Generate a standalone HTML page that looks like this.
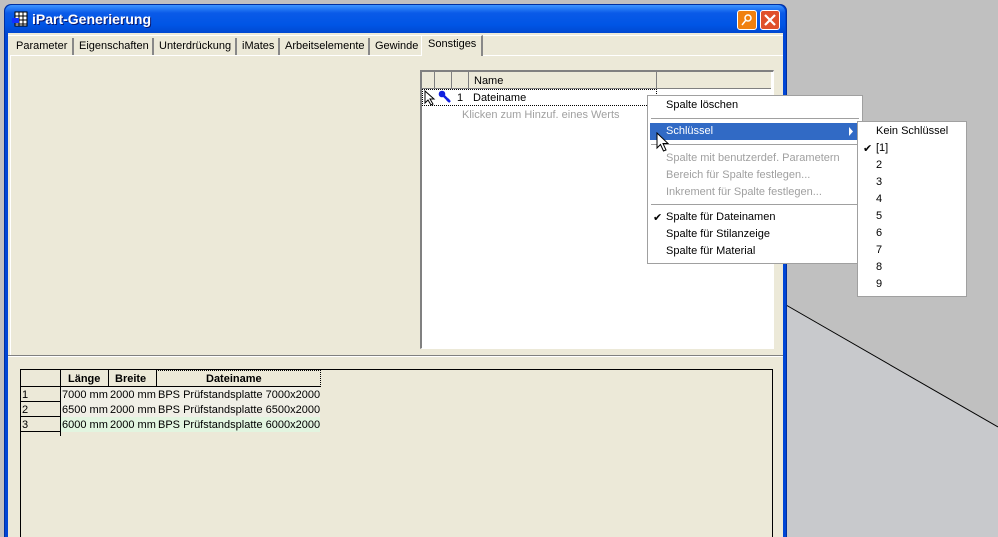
<!DOCTYPE html>
<html><head><meta charset="utf-8"><style>
*{margin:0;padding:0;box-sizing:border-box}
html,body{width:998px;height:537px;overflow:hidden}
body{background:#c0c0c0;font-family:"Liberation Sans",sans-serif;font-size:11px;color:#000;position:relative}
.a{position:absolute}
.t{position:absolute;white-space:nowrap}
</style></head><body>
<div class="a" style="left:786px;top:305px;width:212px;height:232px;background:#c8c9cc"></div>
<svg class="a" style="left:0;top:0" width="998" height="537"><polygon points="786,305 998,427 998,305" fill="#c0c0c0"/><line x1="786" y1="305" x2="998" y2="427" stroke="#000" stroke-width="1"/></svg>
<div class="a" style="left:4px;top:4px;width:783px;height:533px;background:#0046d5;border-radius:7px 7px 0 0;border:1px solid #0030a0;border-bottom:none"></div>
<div class="a" style="left:5px;top:5px;width:780px;height:28px;border-radius:7px 7px 0 0;background:linear-gradient(#3d95ff,#0a5ae8 8px,#0055e5 20px,#0048d0)"></div>
<svg class="a" style="left:11px;top:11px" width="18" height="18"><rect x="4" y="1" width="12" height="14" fill="#fff" stroke="#000"/><path d="M4 5H16M4 9H16M4 13H16M8 1V15M12 1V15" stroke="#000"/><rect x="1" y="7" width="7" height="5" fill="#1030ff"/></svg>
<div class="t" style="left:32px;top:11px;color:#fff;font-weight:bold;font-size:14px;text-shadow:1px 1px #0a1870">iPart-Generierung</div>
<div class="a" style="left:737px;top:10px;width:20px;height:20px;background:#f08010;border:1px solid #fff;border-radius:3px"></div>
<svg class="a" style="left:739px;top:12px" width="16" height="16"><circle cx="9" cy="6" r="3" fill="none" stroke="#fff" stroke-width="1.5"/><path d="M7 8L3 13" stroke="#fff" stroke-width="1.5"/></svg>
<div class="a" style="left:760px;top:10px;width:20px;height:20px;background:#e0502a;border:1px solid #fff;border-radius:3px"></div>
<svg class="a" style="left:762px;top:12px" width="16" height="16"><path d="M3 3L13 13M13 3L3 13" stroke="#fff" stroke-width="2.2"/></svg>
<div class="a" style="left:8px;top:33px;width:775px;height:504px;background:#ece9d8"></div>
<div class="a" style="left:8px;top:35px;width:775px;height:1px;background:#fff"></div>
<div class="a" style="left:10px;top:55px;width:773px;height:1px;background:#fff"></div>
<div class="t" style="left:16px;top:40px">Parameter</div>
<div class="a" style="left:72px;top:38px;width:2px;height:17px;background:#888"></div>
<div class="t" style="left:79px;top:40px">Eigenschaften</div>
<div class="a" style="left:152px;top:38px;width:2px;height:17px;background:#888"></div>
<div class="t" style="left:159px;top:40px">Unterdrückung</div>
<div class="a" style="left:235px;top:38px;width:2px;height:17px;background:#888"></div>
<div class="t" style="left:242px;top:40px">iMates</div>
<div class="a" style="left:278px;top:38px;width:2px;height:17px;background:#888"></div>
<div class="t" style="left:285px;top:40px">Arbeitselemente</div>
<div class="a" style="left:368px;top:38px;width:2px;height:17px;background:#888"></div>
<div class="t" style="left:375px;top:40px">Gewinde</div>
<div class="a" style="left:421px;top:35px;width:62px;height:21px;background:#ece9d8;border-top:1px solid #fff;border-left:1px solid #fff;border-right:2px solid #888"></div>
<div class="t" style="left:428px;top:38px">Sonstiges</div>
<div class="a" style="left:10px;top:55px;width:1px;height:300px;background:#fff"></div>
<div class="a" style="left:420px;top:70px;width:354px;height:279px;background:#fff;border-top:2px solid #808080;border-left:2px solid #808080;border-right:1px solid #fff;border-bottom:1px solid #fff"></div>
<div class="a" style="left:422px;top:72px;width:349px;height:17px;background:#ece9d8;border-bottom:1px solid #808080"></div>
<div class="a" style="left:434px;top:72px;width:1px;height:17px;background:#808080"></div>
<div class="a" style="left:451px;top:72px;width:1px;height:17px;background:#808080"></div>
<div class="a" style="left:468px;top:72px;width:1px;height:17px;background:#808080"></div>
<div class="a" style="left:656px;top:72px;width:1px;height:17px;background:#808080"></div>
<div class="t" style="left:474px;top:75px">Name</div>
<div class="a" style="left:422px;top:89px;width:235px;height:17px;border:1px dotted #000"></div>
<svg class="a" style="left:423px;top:90px" width="14" height="16"><path d="M2 1V13L5 10L8 15L10 14L7 9H11Z" fill="#fff" stroke="#000"/></svg>
<svg class="a" style="left:438px;top:90px" width="14" height="14"><circle cx="4" cy="4" r="3.3" fill="#1020e0"/><path d="M5 5L12 12M9 11L11 9" stroke="#1020e0" stroke-width="2.5"/></svg>
<div class="t" style="left:457px;top:92px">1</div>
<div class="t" style="left:473px;top:92px">Dateiname</div>
<div class="t" style="left:462px;top:109px;color:#a0a0a0">Klicken zum Hinzuf. eines Werts</div>
<div class="a" style="left:8px;top:355px;width:775px;height:1px;background:#808080"></div>
<div class="a" style="left:8px;top:356px;width:775px;height:1px;background:#fff"></div>
<div class="a" style="left:20px;top:369px;width:753px;height:170px;border:1px solid #000;background:#ece9d8"></div>
<div class="a" style="left:60px;top:370px;width:1px;height:66px;background:#000"></div>
<div class="a" style="left:60px;top:386px;width:261px;height:50px;border-top:1px solid #000"></div>
<div class="a" style="left:108px;top:370px;width:1px;height:17px;background:#000"></div>
<div class="a" style="left:156px;top:370px;width:1px;height:17px;background:#000"></div>
<div class="a" style="left:156px;top:370px;width:165px;height:17px;border:1px dotted #000"></div>
<div class="t" style="left:68px;top:373px;font-weight:bold">Länge</div>
<div class="t" style="left:115px;top:373px;font-weight:bold">Breite</div>
<div class="t" style="left:206px;top:373px;font-weight:bold">Dateiname</div>
<div class="a" style="left:21px;top:386px;width:40px;height:1px;background:#000"></div>
<div class="a" style="left:21px;top:401px;width:40px;height:1px;background:#000"></div>
<div class="a" style="left:21px;top:416px;width:40px;height:1px;background:#000"></div>
<div class="a" style="left:21px;top:431px;width:40px;height:1px;background:#000"></div>
<div class="a" style="left:61px;top:387px;width:259px;height:30px;background:#f0efe6"></div>
<div class="a" style="left:61px;top:417px;width:259px;height:15px;background:#e2f5e0"></div>
<div class="t" style="left:22px;top:389px">1</div><div class="t" style="left:62px;top:389px">7000 mm</div><div class="t" style="left:110px;top:389px">2000 mm</div><div class="t" style="left:158px;top:389px">BPS Prüfstandsplatte 7000x2000</div>
<div class="t" style="left:22px;top:404px">2</div><div class="t" style="left:62px;top:404px">6500 mm</div><div class="t" style="left:110px;top:404px">2000 mm</div><div class="t" style="left:158px;top:404px">BPS Prüfstandsplatte 6500x2000</div>
<div class="t" style="left:22px;top:419px">3</div><div class="t" style="left:62px;top:419px">6000 mm</div><div class="t" style="left:110px;top:419px">2000 mm</div><div class="t" style="left:158px;top:419px">BPS Prüfstandsplatte 6000x2000</div>
<div class="a" style="left:647px;top:95px;width:216px;height:169px;background:#fff;border:1px solid #a0a0a0"></div>
<div class="t" style="left:666px;top:99px">Spalte löschen</div>
<div class="a" style="left:651px;top:118px;width:208px;height:1px;background:#a0a0a0"></div>
<div class="a" style="left:650px;top:123px;width:210px;height:17px;background:#316ac5"></div>
<div class="t" style="left:666px;top:125px;color:#fff">Schlüssel</div>
<svg class="a" style="left:848px;top:127px" width="6" height="9"><path d="M1 0L5 4.5L1 9Z" fill="#fff"/></svg>
<div class="a" style="left:651px;top:144px;width:208px;height:1px;background:#a0a0a0"></div>
<div class="t" style="left:666px;top:152px;color:#a0a0a0">Spalte mit benutzerdef. Parametern</div>
<div class="t" style="left:666px;top:169px;color:#a0a0a0">Bereich für Spalte festlegen...</div>
<div class="t" style="left:666px;top:186px;color:#a0a0a0">Inkrement für Spalte festlegen...</div>
<div class="a" style="left:651px;top:204px;width:208px;height:1px;background:#a0a0a0"></div>
<div class="t" style="left:653px;top:211px">✔</div>
<div class="t" style="left:666px;top:211px">Spalte für Dateinamen</div>
<div class="t" style="left:666px;top:228px">Spalte für Stilanzeige</div>
<div class="t" style="left:666px;top:245px">Spalte für Material</div>
<svg class="a" style="left:656px;top:132px" width="14" height="22"><path d="M1 1V16L4.5 12.5L7.5 19L10 18L7 11.5H12Z" fill="#fff" stroke="#000"/></svg>
<div class="a" style="left:857px;top:121px;width:110px;height:176px;background:#fff;border:1px solid #a0a0a0"></div>
<div class="t" style="left:876px;top:125px">Kein Schlüssel</div>
<div class="t" style="left:863px;top:142px">✔</div>
<div class="t" style="left:876px;top:142px">[1]</div>
<div class="t" style="left:876px;top:159px">2</div>
<div class="t" style="left:876px;top:176px">3</div>
<div class="t" style="left:876px;top:193px">4</div>
<div class="t" style="left:876px;top:210px">5</div>
<div class="t" style="left:876px;top:227px">6</div>
<div class="t" style="left:876px;top:244px">7</div>
<div class="t" style="left:876px;top:261px">8</div>
<div class="t" style="left:876px;top:278px">9</div>
</body></html>
